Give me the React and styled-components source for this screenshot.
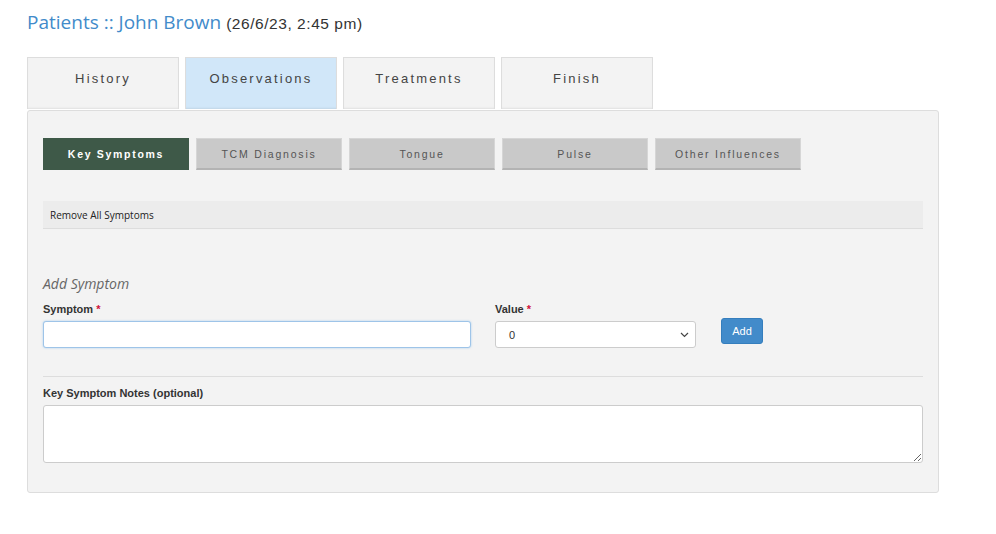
import React from "react";
import styled, { createGlobalStyle } from "styled-components";

const Global = createGlobalStyle`
  html, body { margin: 0; padding: 0; background: #fff; }
  body { font-family: "Liberation Sans", Arial, sans-serif; color: #333; }
  * { box-sizing: border-box; }
`;

const Page = styled.div`
  padding: 9px 0 40px 27px;
  width: 939px;
`;

const Title = styled.h1`
  margin: 0 0 20px 0;
  font-family: "Open Sans", sans-serif;
  font-weight: 400;
  font-size: 19px;
  line-height: 26px;
  color: #428bca;
`;

const Stamp = styled.span`
  font-family: "Liberation Sans", Arial, sans-serif;
  font-size: 15.5px;
  letter-spacing: 0.55px;
  color: #333;
`;

const TabRow = styled.div`
  display: flex;
  gap: 6px;
  margin-bottom: 1px;
`;

const Tab = styled.div`
  width: 152px;
  height: 52px;
  display: flex;
  align-items: center;
  justify-content: center;
  padding-bottom: 10px;
  border: 1px solid #ddd;
  border-bottom: none;
  background: ${(p) => (p.$active ? "#d1e7f9" : "#f3f3f3")};
  box-shadow: inset 0 -2px 2px -1px rgba(0, 0, 0, 0.08);
  font-family: "Liberation Sans", Arial, sans-serif;
  font-size: 13px;
  letter-spacing: 2.2px;
  color: #444;
`;

const Panel = styled.div`
  width: 912px;
  background: #f3f3f3;
  border: 1px solid #ddd;
  border-radius: 3px;
  padding: 27px 15px 29px 15px;
`;

const SubTabRow = styled.div`
  display: flex;
  gap: 7px;
`;

const SubTab = styled.div`
  width: 146px;
  height: 32px;
  display: flex;
  align-items: center;
  justify-content: center;
  background: ${(p) => (p.$active ? "#3e5948" : "#c9c9c9")};
  border: 1px solid ${(p) => (p.$active ? "#3e5948" : "#d6d6d6")};
  border-bottom: 2px solid ${(p) => (p.$active ? "#3e5948" : "#b3b3b3")};
  font-family: "Liberation Sans", Arial, sans-serif;
  font-size: 10.5px;
  font-weight: ${(p) => (p.$active ? 700 : 400)};
  letter-spacing: ${(p) => (p.$active ? "1.7px" : "1.8px")};
  color: ${(p) => (p.$active ? "#fff" : "#555")};
`;

const ActionBar = styled.div`
  margin-top: 31px;
  height: 28px;
  display: flex;
  align-items: center;
  padding-left: 7px;
  background: #ececec;
  border-bottom: 1px solid #ddd;
  font-family: "Open Sans", sans-serif;
  font-size: 10px;
  color: #222;
`;

const SectionTitle = styled.h3`
  margin: 45px 0 0 0;
  font-family: "Open Sans", sans-serif;
  font-style: italic;
  font-weight: 400;
  font-size: 14px;
  line-height: 20px;
  color: #666;
`;

const FormRow = styled.div`
  display: flex;
  align-items: flex-end;
  margin-top: 8px;
`;

const Field = styled.div`
  display: flex;
  flex-direction: column;
  width: ${(p) => p.$w}px;
  margin-right: ${(p) => p.$mr || 0}px;
`;

const Label = styled.label`
  font-family: "Liberation Sans", Arial, sans-serif;
  font-weight: 700;
  font-size: 11px;
  line-height: 14px;
  color: #333;
  margin-bottom: 5px;
`;

const Req = styled.span`
  color: #d0103a;
`;

const TextInput = styled.input`
  height: 27px;
  border: 1px solid #9ec4e8;
  border-radius: 3px;
  background: #fff;
  box-shadow: 0 0 2px rgba(102, 175, 233, 0.6);
  outline: none;
  font-size: 12px;
  padding: 0 8px;
`;

const SelectBox = styled.div`
  height: 27px;
  border: 1px solid #ccc;
  border-radius: 3px;
  background: #fff;
  display: flex;
  align-items: center;
  justify-content: space-between;
  padding: 0 6px 0 13px;
  font-family: "Liberation Sans", Arial, sans-serif;
  font-size: 11px;
  color: #333;
`;

const AddButton = styled.button`
  width: 42px;
  height: 26px;
  margin-bottom: 4px;
  background: #428bca;
  border: 1px solid #357ebd;
  border-radius: 3px;
  color: #fff;
  font-family: "Liberation Sans", Arial, sans-serif;
  font-size: 11px;
  padding: 0;
`;

const Divider = styled.hr`
  margin: 28px 0 0 0;
  border: none;
  border-top: 1px solid #ddd;
`;

const NotesField = styled.div`
  display: flex;
  flex-direction: column;
  margin-top: 9px;
`;

const NotesArea = styled.textarea`
  height: 58px;
  border: 1px solid #ccc;
  border-radius: 3px;
  background: #fff;
  resize: vertical;
  margin: 0;
  outline: none;
`;

const Chevron = () => (
  <svg width="9" height="6" viewBox="0 0 9 6" fill="none">
    <path d="M1 1l3.5 3.5L8 1" stroke="#444" strokeWidth="1.2" />
  </svg>
);

export default function App() {
  const tabs = ["History", "Observations", "Treatments", "Finish"];
  const subTabs = ["Key Symptoms", "TCM Diagnosis", "Tongue", "Pulse", "Other Influences"];
  return (
    <>
      <Global />
      <Page>
        <Title>
          Patients :: John Brown <Stamp>(26/6/23, 2:45 pm)</Stamp>
        </Title>
        <TabRow>
          {tabs.map((t) => (
            <Tab key={t} $active={t === "Observations"}>{t}</Tab>
          ))}
        </TabRow>
        <Panel>
          <SubTabRow>
            {subTabs.map((t) => (
              <SubTab key={t} $active={t === "Key Symptoms"}>{t}</SubTab>
            ))}
          </SubTabRow>
          <ActionBar>Remove All Symptoms</ActionBar>
          <SectionTitle>Add Symptom</SectionTitle>
          <FormRow>
            <Field $w={428} $mr={24}>
              <Label>Symptom <Req>*</Req></Label>
              <TextInput />
            </Field>
            <Field $w={201} $mr={25}>
              <Label>Value <Req>*</Req></Label>
              <SelectBox>
                <span>0</span>
                <Chevron />
              </SelectBox>
            </Field>
            <AddButton>Add</AddButton>
          </FormRow>
          <Divider />
          <NotesField>
            <Label>Key Symptom Notes (optional)</Label>
            <NotesArea />
          </NotesField>
        </Panel>
      </Page>
    </>
  );
}
